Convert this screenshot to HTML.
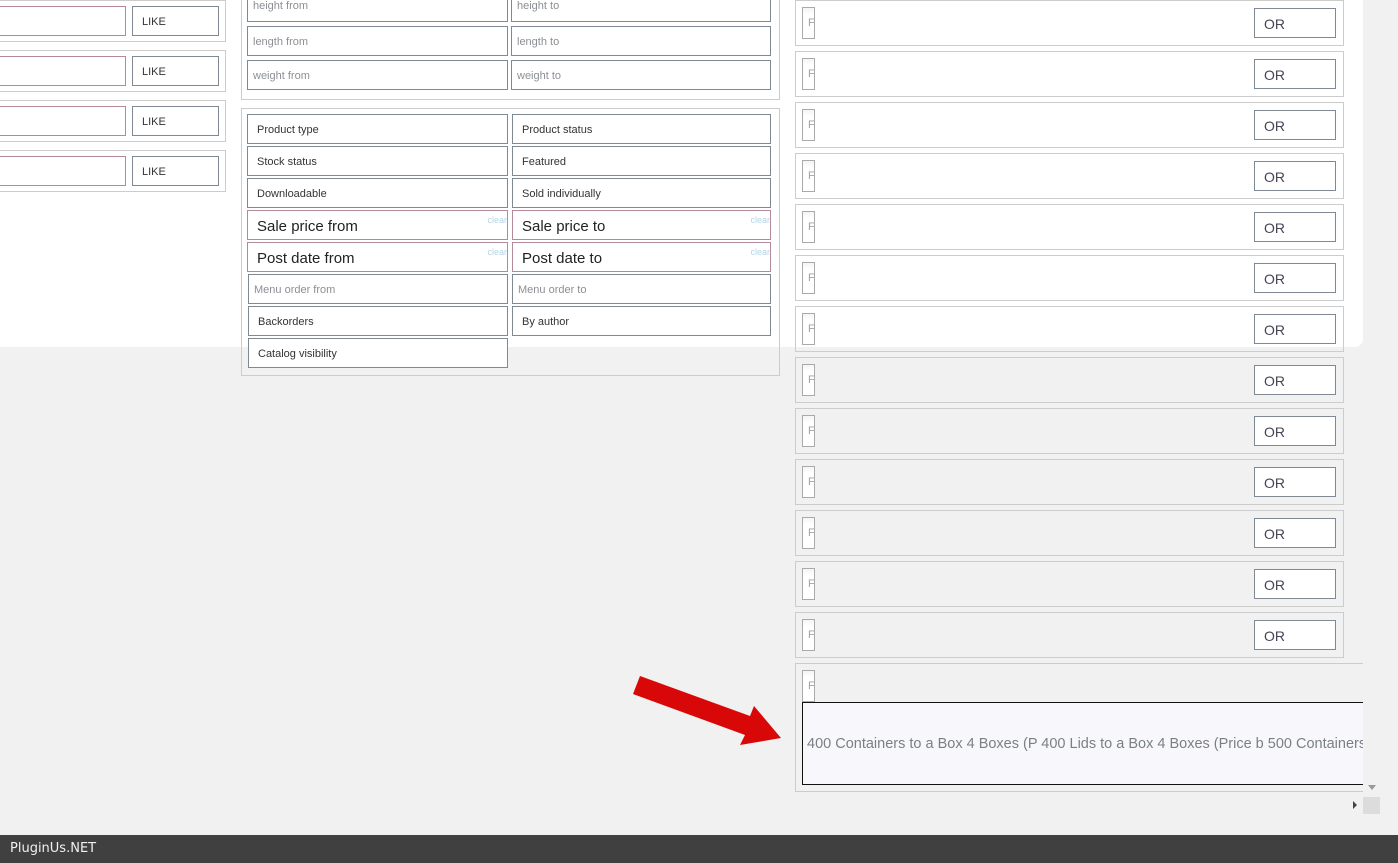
<!DOCTYPE html>
<html><head><meta charset="utf-8"><style>
*{box-sizing:border-box;margin:0;padding:0}
body{width:1398px;height:863px;background:#f1f1f1;position:relative;overflow:hidden;font-family:"Liberation Sans","DejaVu Sans",sans-serif;}
.a{position:absolute}
.white{left:0;top:0;width:1363px;height:347px;background:#fff;border-bottom-right-radius:8px}
.box{position:absolute;border:1px solid #ccc}
.in{position:absolute;border:1px solid #7e8993;background:#fff;font-size:11px;color:#333;padding-left:9px;padding-top:2px;display:flex;align-items:center;white-space:nowrap;overflow:hidden}
.pink{border-color:#b48a9a}
.ph{color:#8c8f94;padding-left:5px}
.big{font-size:15px;color:#222}
.clr{position:absolute;right:0;top:4px;font-size:9px;color:#b5d4e6}
.or{position:absolute;border:1px solid #7e8993;background:#fff;font-size:14px;color:#445;padding-left:9px;padding-top:1px;display:flex;align-items:center}
.sm{position:absolute;border:1px solid #aaa;background:linear-gradient(#f4f4f4,#fff 6px);width:13px;height:32px;font-size:11px;color:#9aa3b0;display:flex;align-items:center;padding-left:5px;overflow:hidden}
</style></head><body>
<div class="a white"></div>

<div class="box" style="left:-2px;top:0;width:228px;height:42px"></div>
<div class="box" style="left:-2px;top:50px;width:228px;height:42px"></div>
<div class="box" style="left:-2px;top:100px;width:228px;height:42px"></div>
<div class="box" style="left:-2px;top:150px;width:228px;height:42px"></div>
<div class="in pink" style="left:-2px;top:6px;width:128px;height:30px"></div>
<div class="in pink" style="left:-2px;top:56px;width:128px;height:30px"></div>
<div class="in pink" style="left:-2px;top:106px;width:128px;height:30px"></div>
<div class="in pink" style="left:-2px;top:156px;width:128px;height:30px"></div>
<div class="in" style="left:132px;top:6px;width:87px;height:30px">LIKE</div>
<div class="in" style="left:132px;top:56px;width:87px;height:30px">LIKE</div>
<div class="in" style="left:132px;top:106px;width:87px;height:30px">LIKE</div>
<div class="in" style="left:132px;top:156px;width:87px;height:30px">LIKE</div>

<div class="box" style="left:241px;top:-5px;width:539px;height:105px"></div>
<div class="in ph" style="left:247px;top:-8px;width:261px;height:30px;align-items:flex-start;padding-top:7px">height from</div>
<div class="in ph" style="left:511px;top:-8px;width:260px;height:30px;align-items:flex-start;padding-top:7px">height to</div>
<div class="in ph" style="left:247px;top:26px;width:261px;height:30px">length from</div>
<div class="in ph" style="left:511px;top:26px;width:260px;height:30px">length to</div>
<div class="in ph" style="left:247px;top:60px;width:261px;height:30px">weight from</div>
<div class="in ph" style="left:511px;top:60px;width:260px;height:30px">weight to</div>

<div class="box" style="left:241px;top:108px;width:539px;height:268px"></div>
<div class="in" style="left:247px;top:114px;width:261px;height:30px">Product type</div>
<div class="in" style="left:512px;top:114px;width:259px;height:30px">Product status</div>
<div class="in" style="left:247px;top:146px;width:261px;height:30px">Stock status</div>
<div class="in" style="left:512px;top:146px;width:259px;height:30px">Featured</div>
<div class="in" style="left:247px;top:178px;width:261px;height:30px">Downloadable</div>
<div class="in" style="left:512px;top:178px;width:259px;height:30px">Sold individually</div>
<div class="in pink big" style="left:247px;top:210px;width:261px;height:30px">Sale price from<span class="clr">clear</span></div>
<div class="in pink big" style="left:512px;top:210px;width:259px;height:30px">Sale price to<span class="clr">clear</span></div>
<div class="in pink big" style="left:247px;top:242px;width:261px;height:30px">Post date from<span class="clr">clear</span></div>
<div class="in pink big" style="left:512px;top:242px;width:259px;height:30px">Post date to<span class="clr">clear</span></div>
<div class="in ph" style="left:248px;top:274px;width:260px;height:30px">Menu order from</div>
<div class="in ph" style="left:512px;top:274px;width:259px;height:30px">Menu order to</div>
<div class="in" style="left:248px;top:306px;width:260px;height:30px">Backorders</div>
<div class="in" style="left:512px;top:306px;width:259px;height:30px">By author</div>
<div class="in" style="left:248px;top:338px;width:260px;height:30px">Catalog visibility</div>

<div class="box" style="left:795px;top:0;width:549px;height:46px"></div><div class="sm" style="left:802px;top:7px">F</div><div class="or" style="left:1254px;top:8px;width:82px;height:30px">OR</div>
<div class="box" style="left:795px;top:51px;width:549px;height:46px"></div><div class="sm" style="left:802px;top:58px">F</div><div class="or" style="left:1254px;top:59px;width:82px;height:30px">OR</div>
<div class="box" style="left:795px;top:102px;width:549px;height:46px"></div><div class="sm" style="left:802px;top:109px">F</div><div class="or" style="left:1254px;top:110px;width:82px;height:30px">OR</div>
<div class="box" style="left:795px;top:153px;width:549px;height:46px"></div><div class="sm" style="left:802px;top:160px">F</div><div class="or" style="left:1254px;top:161px;width:82px;height:30px">OR</div>
<div class="box" style="left:795px;top:204px;width:549px;height:46px"></div><div class="sm" style="left:802px;top:211px">F</div><div class="or" style="left:1254px;top:212px;width:82px;height:30px">OR</div>
<div class="box" style="left:795px;top:255px;width:549px;height:46px"></div><div class="sm" style="left:802px;top:262px">F</div><div class="or" style="left:1254px;top:263px;width:82px;height:30px">OR</div>
<div class="box" style="left:795px;top:306px;width:549px;height:46px"></div><div class="sm" style="left:802px;top:313px">F</div><div class="or" style="left:1254px;top:314px;width:82px;height:30px">OR</div>
<div class="box" style="left:795px;top:357px;width:549px;height:46px"></div><div class="sm" style="left:802px;top:364px">F</div><div class="or" style="left:1254px;top:365px;width:82px;height:30px">OR</div>
<div class="box" style="left:795px;top:408px;width:549px;height:46px"></div><div class="sm" style="left:802px;top:415px">F</div><div class="or" style="left:1254px;top:416px;width:82px;height:30px">OR</div>
<div class="box" style="left:795px;top:459px;width:549px;height:46px"></div><div class="sm" style="left:802px;top:466px">F</div><div class="or" style="left:1254px;top:467px;width:82px;height:30px">OR</div>
<div class="box" style="left:795px;top:510px;width:549px;height:46px"></div><div class="sm" style="left:802px;top:517px">F</div><div class="or" style="left:1254px;top:518px;width:82px;height:30px">OR</div>
<div class="box" style="left:795px;top:561px;width:549px;height:46px"></div><div class="sm" style="left:802px;top:568px">F</div><div class="or" style="left:1254px;top:569px;width:82px;height:30px">OR</div>
<div class="box" style="left:795px;top:612px;width:549px;height:46px"></div><div class="sm" style="left:802px;top:619px">F</div><div class="or" style="left:1254px;top:620px;width:82px;height:30px">OR</div>

<div class="box" style="left:795px;top:663px;width:580px;height:129px;border-right:none"></div>
<div class="sm" style="left:802px;top:670px">F</div>
<div class="a" style="left:802px;top:702px;width:600px;height:83px;border:1px solid #111;background:#f8f8fc;font-size:14.5px;color:#7a7f86;padding-left:4px;display:flex;align-items:center;white-space:nowrap;overflow:hidden">400 Containers to a Box 4 Boxes (P 400 Lids to a Box 4 Boxes (Price b 500 Containers to a Box</div>
<div class="a" style="left:1363px;top:660px;width:35px;height:175px;background:#f1f1f1"></div>
<div class="a" style="left:1368px;top:785px;width:0;height:0;border-left:4px solid transparent;border-right:4px solid transparent;border-top:5px solid #999"></div>
<div class="a" style="left:1353px;top:801px;width:0;height:0;border-top:4px solid transparent;border-bottom:4px solid transparent;border-left:4px solid #444"></div>
<div class="a" style="left:1363px;top:797px;width:17px;height:17px;background:#dcdcdc"></div>

<svg class="a" style="left:0;top:0" width="1398" height="863"><polygon points="640,676 633,694 745,735 740,745 781,738 754,706 750,716" fill="#d80808"/></svg>

<div class="a" style="left:0;top:835px;width:1398px;height:28px;background:#404040;color:#f0f0f0;font-family:'DejaVu Sans',sans-serif;font-size:13px;padding-left:10px;line-height:28px">PluginUs.NET</div>
</body></html>
